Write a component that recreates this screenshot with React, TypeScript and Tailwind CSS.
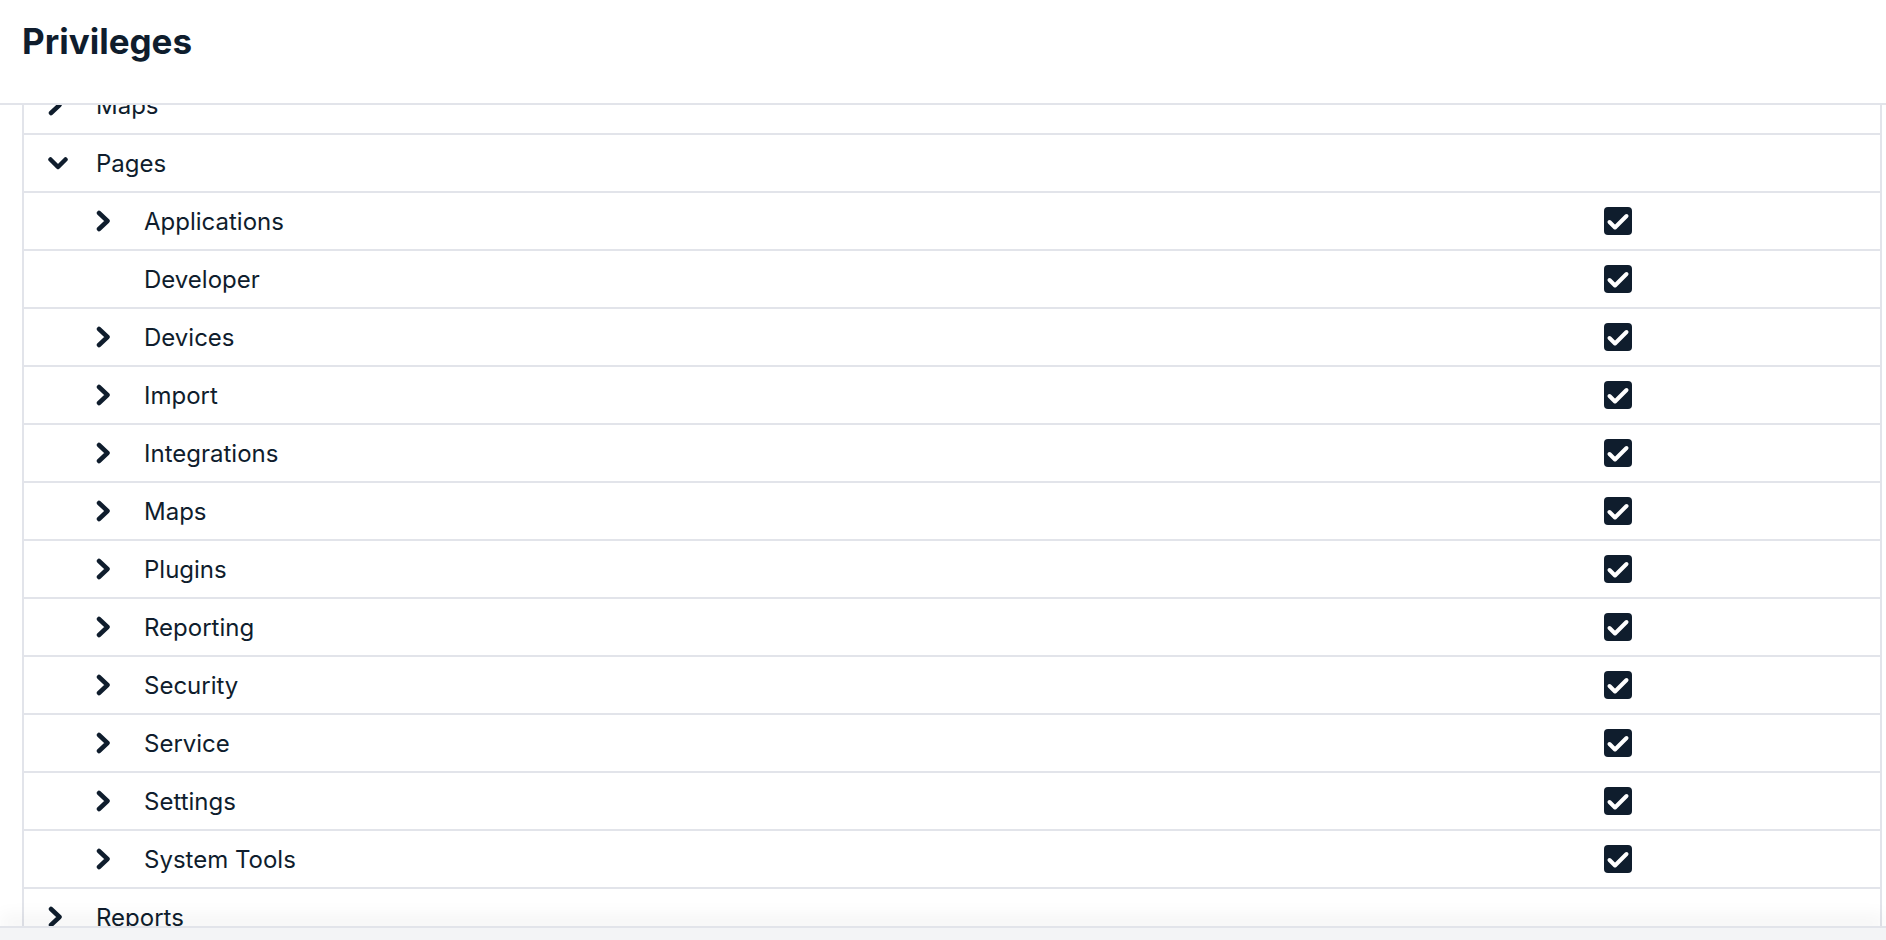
import React from "react";

type Row = { label: string; level: number; state: "open" | "closed" | "none"; checkbox: boolean };

const rows: Row[] = [
  { label: "Maps", level: 1, state: "closed", checkbox: false },
  { label: "Pages", level: 1, state: "open", checkbox: false },
  { label: "Applications", level: 2, state: "closed", checkbox: true },
  { label: "Developer", level: 2, state: "none", checkbox: true },
  { label: "Devices", level: 2, state: "closed", checkbox: true },
  { label: "Import", level: 2, state: "closed", checkbox: true },
  { label: "Integrations", level: 2, state: "closed", checkbox: true },
  { label: "Maps", level: 2, state: "closed", checkbox: true },
  { label: "Plugins", level: 2, state: "closed", checkbox: true },
  { label: "Reporting", level: 2, state: "closed", checkbox: true },
  { label: "Security", level: 2, state: "closed", checkbox: true },
  { label: "Service", level: 2, state: "closed", checkbox: true },
  { label: "Settings", level: 2, state: "closed", checkbox: true },
  { label: "System Tools", level: 2, state: "closed", checkbox: true },
  { label: "Reports", level: 1, state: "closed", checkbox: false },
  { label: "Settings", level: 1, state: "closed", checkbox: false },
];

function ChevronRight() {
  return (
    <svg width="15" height="22" viewBox="0 0 15 22" fill="none">
      <path d="M3 3 L11.5 11 L3 19" stroke="#0f1d2d" strokeWidth="4.5" strokeLinecap="round" strokeLinejoin="round" />
    </svg>
  );
}

function ChevronDown() {
  return (
    <svg width="20" height="15" viewBox="0 0 20 15" fill="none">
      <path d="M2.5 3.5 L10 11 L17.5 3.5" stroke="#0f1d2d" strokeWidth="4.5" strokeLinecap="round" strokeLinejoin="round" />
    </svg>
  );
}

function Checkbox() {
  return (
    <div className="w-[28px] h-[28px] rounded-[4px] bg-[#0f1d2d] flex items-center justify-center">
      <svg width="28" height="28" viewBox="0 0 28 28" fill="none">
        <path d="M5.5 15 L11 20.5 L22.5 9" stroke="#ffffff" strokeWidth="4" strokeLinecap="round" strokeLinejoin="round" />
      </svg>
    </div>
  );
}

function TreeRow({ row }: { row: Row }) {
  return (
    <div className="flex items-center h-[58px] border-b-2 border-[#e2e4ea]">
      <div className={row.level === 2 ? "flex items-center flex-1 pl-[72px]" : "flex items-center flex-1 pl-[24px]"}>
        <div className="w-[48px] flex items-center">
          {row.state === "closed" && <ChevronRight />}
          {row.state === "open" && <ChevronDown />}
        </div>
        <span className="text-[24px] leading-[30px] pt-[2px] text-[#0f1d2d]">{row.label}</span>
      </div>
      <div className="w-[276px] flex items-center">{row.checkbox && <Checkbox />}</div>
    </div>
  );
}

export default function App() {
  return (
    <div
      className="h-screen w-full flex flex-col overflow-hidden bg-white"
      style={{ fontFamily: "Inter, 'Noto Sans', sans-serif" }}
    >
      <header className="shrink-0 h-[105px] border-b-2 border-[#e2e4ea] pl-[22px] pt-[21px]">
        <h1 className="text-[35px] leading-[40px] font-bold text-[#0f1d2d]">Privileges</h1>
      </header>
      <main className="flex-1 overflow-hidden">
        <div className="ml-[22px] mr-[4px] -mt-[28px] border-x-2 border-[#e2e4ea]">
          {rows.map((r, i) => (
            <TreeRow key={i} row={r} />
          ))}
        </div>
      </main>
      <footer className="shrink-0 h-[14px] border-t-2 border-[#e2e4ea] bg-[#f3f4f6] shadow-[0_-10px_18px_rgba(0,0,0,0.05)]" />
    </div>
  );
}
